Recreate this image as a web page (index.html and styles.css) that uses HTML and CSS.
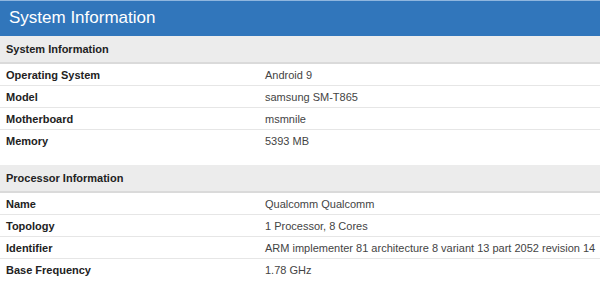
FILE: index.html
```html
<!DOCTYPE html>
<html>
<head>
<meta charset="utf-8">
<link rel="stylesheet" href="styles.css">
</head>
<body>
<div class="panel">
  <div class="panel-title">System Information</div>
  <table class="info">
    <colgroup><col class="col-name"><col></colgroup>
    <tr class="head"><th colspan="2">System Information</th></tr>
    <tr><td class="name">Operating System</td><td class="value">Android 9</td></tr>
    <tr><td class="name">Model</td><td class="value">samsung SM-T865</td></tr>
    <tr><td class="name">Motherboard</td><td class="value">msmnile</td></tr>
    <tr class="last"><td class="name">Memory</td><td class="value">5393 MB</td></tr>
  </table>
  <table class="info">
    <colgroup><col class="col-name"><col></colgroup>
    <tr class="head"><th colspan="2">Processor Information</th></tr>
    <tr><td class="name">Name</td><td class="value">Qualcomm Qualcomm</td></tr>
    <tr><td class="name">Topology</td><td class="value">1 Processor, 8 Cores</td></tr>
    <tr><td class="name">Identifier</td><td class="value">ARM implementer 81 architecture 8 variant 13 part 2052 revision 14</td></tr>
    <tr class="last"><td class="name">Base Frequency</td><td class="value">1.78 GHz</td></tr>
  </table>
</div>
</body>
</html>
```
FILE: styles.css
```css
html, body {
  margin: 0;
  padding: 0;
  background: #fff;
}
body {
  font-family: "Liberation Sans", Arial, sans-serif;
  width: 600px;
  height: 286px;
  overflow: hidden;
}
.panel-title {
  background: #3176bb;
  border-top: 1px solid #8fb6de;
  color: #fff;
  font-size: 17px;
  line-height: 34px;
  padding-left: 9px;
  box-sizing: border-box;
  height: 36px;
}
.info {
  width: 100%;
  table-layout: fixed;
  border-collapse: collapse;
  margin-bottom: 14px;
}
.info .col-name {
  width: 259px;
}
.info th {
  background: #ececec;
  border-bottom: 2px solid #dadada;
  text-align: left;
  font-size: 11px;
  font-weight: bold;
  color: #222;
  height: 26px;
  padding: 0 6px;
}
.info td {
  font-size: 11px;
  height: 21px;
  padding: 0 6px;
  border-bottom: 1px solid #e6e6e6;
  white-space: nowrap;
  overflow: hidden;
}
.info tr.last td {
  border-bottom: none;
}
.info td.name {
  font-weight: bold;
  color: #222;
}
.info td.value {
  color: #444;
}
```
